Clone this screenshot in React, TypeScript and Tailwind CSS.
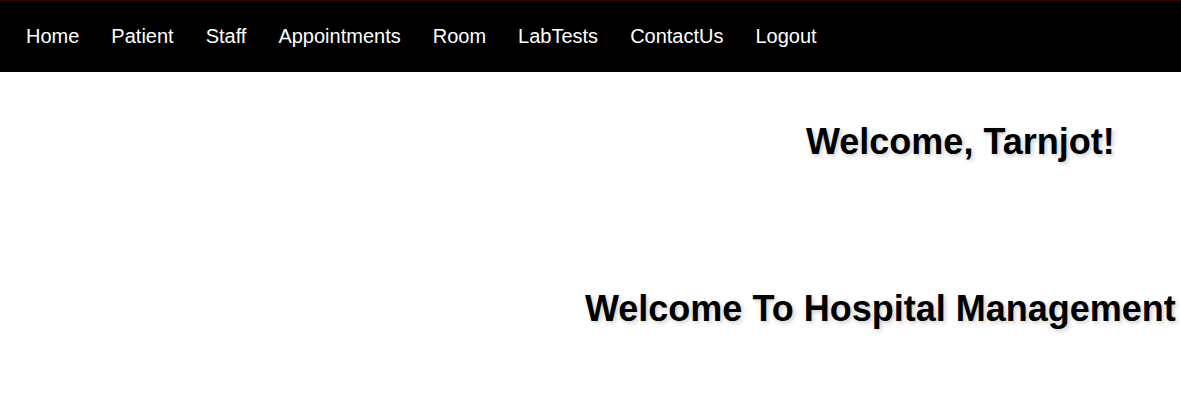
import React from "react";

const links = ["Home", "Patient", "Staff", "Appointments", "Room", "LabTests", "ContactUs", "Logout"];

export default function App() {
  return (
    <div className="min-h-[411px] bg-white font-['Liberation_Sans',Arial,sans-serif] text-black">
      <nav className="flex h-[72px] items-center border-t border-[#3a0000] bg-black pl-[10px]">
        {links.map((l) => (
          <a key={l} href="#" className="px-4 text-[20px] leading-[23px] text-white">
            {l}
          </a>
        ))}
      </nav>
      <div className="flex flex-col">
        <h1 className="mt-[49px] pl-[806px] whitespace-nowrap text-[36px] font-bold leading-[41px] [text-shadow:2px_2px_4px_rgba(0,0,0,0.2)]">
          Welcome, Tarnjot!
        </h1>
        <h2 className="mt-[126px] pl-[585px] whitespace-nowrap text-[36px] font-bold leading-[41px] [text-shadow:2px_2px_4px_rgba(0,0,0,0.2)]">
          Welcome To Hospital Management
        </h2>
      </div>
    </div>
  );
}
